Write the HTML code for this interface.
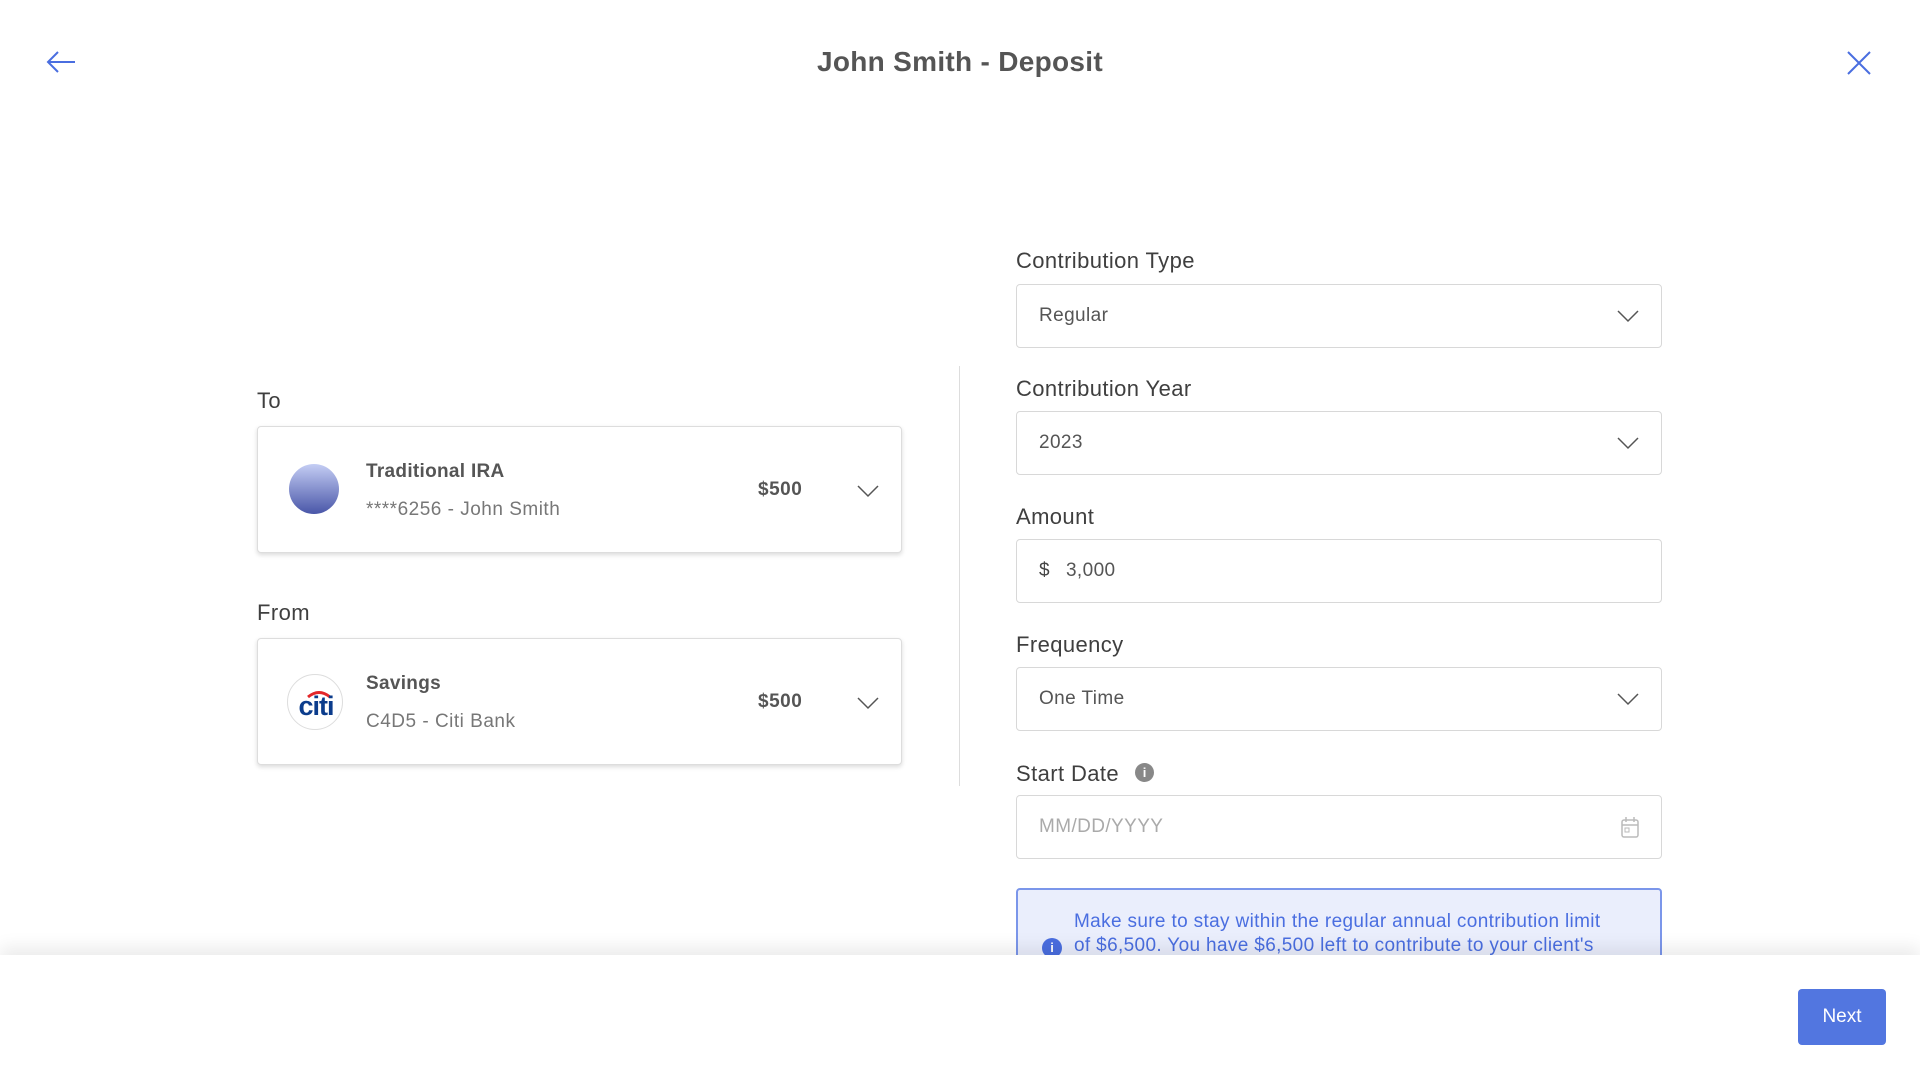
<!DOCTYPE html>
<html><head><meta charset="utf-8"><style>
*{box-sizing:border-box;margin:0;padding:0}
body{width:1920px;height:1079px;overflow:hidden;background:#fff;font-family:"Liberation Sans",sans-serif;color:#4a4a4a;position:relative}
.abs{position:absolute}
.title{left:0;width:1920px;top:46px;text-align:center;font-size:28px;font-weight:bold;color:#555;letter-spacing:0.3px}
.lbl{font-size:22px;color:#3f3f3f;letter-spacing:0.4px}
.card{left:257px;width:645px;height:127px;border:1px solid #ddd;border-radius:4px;box-shadow:0 2px 5px rgba(0,0,0,.15);background:#fff}
.card .t{position:absolute;left:108px;top:34px;font-size:19px;font-weight:bold;color:#555;letter-spacing:0.3px}
.card .s{position:absolute;left:108px;top:72px;font-size:19px;color:#777;letter-spacing:0.5px}
.card .amt{position:absolute;left:500px;top:52px;font-size:19px;font-weight:bold;color:#555;letter-spacing:0.5px}
.card svg.ch{position:absolute;left:599px;top:58px}
.box{left:1016px;width:646px;height:64px;border:1px solid #d8d8d8;border-radius:4px;background:#fff;font-size:19px;color:#555;padding-left:22px;line-height:62px;letter-spacing:0.4px}
.box svg{position:absolute;right:22px;top:25px}
</style></head><body>
<svg class="abs" style="left:45px;top:50px" width="32" height="24" viewBox="0 0 32 24"><path d="M30 12H3M13 2L3 12l10 10" fill="none" stroke="#4a6ee0" stroke-width="2"/></svg>
<div class="abs title">John Smith - Deposit</div>
<svg class="abs" style="left:1847px;top:51px" width="24" height="24" viewBox="0 0 24 24"><path d="M1 1l22 22M23 1L1 23" stroke="#4a6ee0" stroke-width="2"/></svg>

<div class="abs lbl" style="left:257px;top:388px">To</div>
<div class="abs card" style="top:426px">
<div style="position:absolute;left:31px;top:37px;width:50px;height:50px;border-radius:50%;background:linear-gradient(#c4cdf4,#4956a8)"></div>
<div class="t">Traditional IRA</div><div class="s">****6256 - John Smith</div><div class="amt">$500</div>
<svg class="ch" width="22" height="13" viewBox="0 0 22 13"><path d="M1 1l10 10L21 1" fill="none" stroke="#555" stroke-width="1.5"/></svg>
</div>
<div class="abs lbl" style="left:257px;top:600px">From</div>
<div class="abs card" style="top:638px">
<div style="position:absolute;left:29px;top:35px;width:56px;height:56px;border-radius:50%;border:1px solid #ddd;background:#fff;overflow:hidden">
<svg width="56" height="56" viewBox="0 0 56 56"><path d="M20 22q11-9 22 0" fill="none" stroke="#e3262a" stroke-width="3"/><text x="28" y="40" text-anchor="middle" font-family="Liberation Sans" font-weight="bold" font-size="27" fill="#0b3c8c" letter-spacing="-1">citi</text></svg></div>
<div class="t">Savings</div><div class="s">C4D5 - Citi Bank</div><div class="amt">$500</div>
<svg class="ch" width="22" height="13" viewBox="0 0 22 13"><path d="M1 1l10 10L21 1" fill="none" stroke="#555" stroke-width="1.5"/></svg>
</div>
<div class="abs" style="left:959px;top:366px;width:1px;height:420px;background:#ddd"></div>

<div class="abs lbl" style="left:1016px;top:248px">Contribution Type</div>
<div class="abs box" style="top:284px">Regular<svg width="22" height="13" viewBox="0 0 22 13"><path d="M1 1l10 10L21 1" fill="none" stroke="#555" stroke-width="1.5"/></svg></div>
<div class="abs lbl" style="left:1016px;top:376px">Contribution Year</div>
<div class="abs box" style="top:411px">2023<svg width="22" height="13" viewBox="0 0 22 13"><path d="M1 1l10 10L21 1" fill="none" stroke="#555" stroke-width="1.5"/></svg></div>
<div class="abs lbl" style="left:1016px;top:504px">Amount</div>
<div class="abs box" style="top:539px"><b style="font-weight:normal;color:#444;margin-right:16px">$</b>3,000</div>
<div class="abs lbl" style="left:1016px;top:632px">Frequency</div>
<div class="abs box" style="top:667px">One Time<svg width="22" height="13" viewBox="0 0 22 13"><path d="M1 1l10 10L21 1" fill="none" stroke="#555" stroke-width="1.5"/></svg></div>
<div class="abs lbl" style="left:1016px;top:761px">Start Date</div>
<div class="abs" style="left:1135px;top:763px;width:19px;height:19px;border-radius:50%;background:#888;color:#fff;font-size:13px;font-weight:bold;text-align:center;line-height:19px">i</div>
<div class="abs box" style="top:795px;color:#aaa">MM/DD/YYYY<svg style="top:20px" width="18" height="22" viewBox="0 0 18 22"><rect x="1" y="4" width="16" height="17" rx="2" fill="none" stroke="#bbb" stroke-width="1.5"/><path d="M5 1v5M13 1v5M1 9h16" stroke="#bbb" stroke-width="1.5"/><rect x="4" y="12" width="4" height="4" fill="none" stroke="#bbb"/></svg></div>
<div class="abs" style="left:1016px;top:888px;width:646px;height:100px;border:2px solid #7b96ea;border-radius:4px;background:#eaeefc;color:#4a6ee0;font-size:19px;line-height:24px;padding:20px 10px 0 56px;letter-spacing:0.35px;white-space:nowrap">Make sure to stay within the regular annual contribution limit<br>of $6,500. You have $6,500 left to contribute to your client's
<div style="position:absolute;left:24px;top:48px;width:20px;height:20px;border-radius:50%;background:#4a6ee0;color:#fff;font-size:13px;font-weight:bold;text-align:center;line-height:20px;letter-spacing:0">i</div></div>

<div class="abs" style="left:0;top:955px;width:1920px;height:124px;background:#fff;box-shadow:0 -8px 16px rgba(0,0,0,.08)"></div>
<div class="abs" style="left:1798px;top:989px;width:88px;height:56px;border-radius:4px;background:#5276e0;color:#fff;font-size:19px;text-align:center;line-height:56px">Next</div>
</body></html>
